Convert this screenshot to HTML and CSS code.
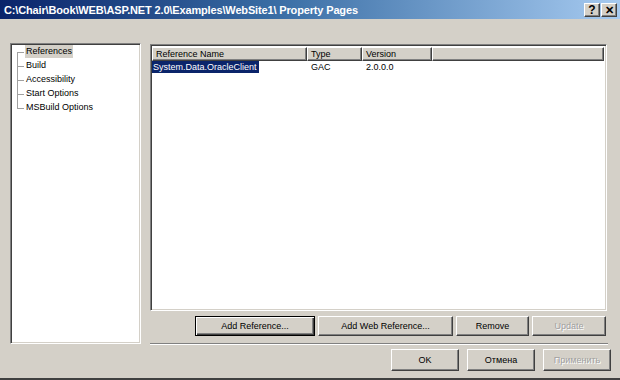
FILE: index.html
```html
<!DOCTYPE html>
<html>
<head>
<meta charset="utf-8">
<link rel="stylesheet" href="styles.css">
</head>
<body>
<div class="window">
  <div class="titlebar">
    <span class="title">C:\Chair\Book\WEB\ASP.NET 2.0\Examples\WebSite1\ Property Pages</span>
    <div class="tbtns">
      <span class="tbtn">?</span>
      <span class="tbtn close">✕</span>
    </div>
  </div>
  <div class="content">
    <div class="main">
      <div class="tree sunken">
        <ul class="items">
          <li class="item selected"><span>References</span></li>
          <li class="item"><span>Build</span></li>
          <li class="item"><span>Accessibility</span></li>
          <li class="item"><span>Start Options</span></li>
          <li class="item last"><span>MSBuild Options</span></li>
        </ul>
      </div>
      <div class="right">
        <div class="list sunken">
          <div class="header">
            <div class="hcell c1">Reference Name</div>
            <div class="hcell c2">Type</div>
            <div class="hcell c3">Version</div>
            <div class="hcell c4"></div>
          </div>
          <div class="row">
            <div class="cell c1"><span class="sel">System.Data.OracleClient</span></div>
            <div class="cell c2">GAC</div>
            <div class="cell c3">2.0.0.0</div>
          </div>
        </div>
        <div class="btnrow">
          <button class="btn default w-add">Add Reference...</button>
          <button class="btn w-web">Add Web Reference...</button>
          <button class="btn w-rem">Remove</button>
          <button class="btn w-upd disabled">Update</button>
        </div>
        <div class="separator"></div>
      </div>
    </div>
    <div class="footer">
      <button class="btn w-foot">OK</button>
      <button class="btn w-foot">Отмена</button>
      <button class="btn w-foot disabled">Применить</button>
    </div>
  </div>
</div>
</body>
</html>
```

FILE: styles.css
```css
* { box-sizing: border-box; }
html, body { margin: 0; padding: 0; }
body {
  width: 620px;
  height: 380px;
  background: #d4d0c8;
  font-family: "Liberation Sans", Arial, sans-serif;
  font-size: 9px;
  color: #000;
  overflow: hidden;
}
.window {
  width: 620px;
  height: 380px;
  border-bottom: 2px solid #404040;
  display: flex;
  flex-direction: column;
}
.titlebar {
  height: 19px;
  background: linear-gradient(to right, #0a246a 0%, #3a6ea5 45%, #a6caf0 100%);
  display: flex;
  align-items: center;
  justify-content: space-between;
  padding: 0 4px 0 4px;
}
.title {
  color: #fff;
  font-weight: bold;
  font-size: 11px;
  letter-spacing: -0.15px;
  white-space: nowrap;
}
.tbtns { display: flex; gap: 1px; margin-top: 1px; margin-right: -1px; }
.tbtn {
  width: 16px;
  height: 14px;
  background: #d4d0c8;
  border-top: 1px solid #fff;
  border-left: 1px solid #fff;
  border-right: 1px solid #404040;
  border-bottom: 1px solid #404040;
  box-shadow: inset -1px -1px 0 #808080;
  font-weight: bold;
  font-size: 12px;
  line-height: 12px;
  text-align: center;
  color: #000;
}
.tbtn.close { font-size: 11px; }
.content {
  flex: 1;
  padding: 24px 9px 0 10px;
  display: flex;
  flex-direction: column;
}
.main {
  display: flex;
  gap: 9px;
}
.sunken {
  border-top: 1px solid #808080;
  border-left: 1px solid #808080;
  border-right: 1px solid #fff;
  border-bottom: 1px solid #fff;
  box-shadow: inset 1px 1px 0 #404040, inset -1px -1px 0 #d4d0c8;
  background: #fff;
}
.tree {
  width: 131px;
  height: 301px;
  padding: 1px 2px 2px 6px;
}
.items {
  list-style: none;
  margin: 0;
  padding: 0;
}
.item {
  position: relative;
  height: 14px;
  line-height: 13px;
  padding-left: 8px;
}
.item::before {
  content: "";
  position: absolute;
  left: 0;
  top: 7px;
  width: 7px;
  border-top: 1px solid #a0a0a0;
}
.item::after {
  content: "";
  position: absolute;
  left: 0;
  top: 7px;
  height: 14px;
  border-left: 1px solid #a0a0a0;
}
.item.last::after { display: none; }
.item span { padding: 0 1px; display: inline-block; }
.item.selected span { background: #d4d0c8; }
.right {
  display: flex;
  flex-direction: column;
  width: 458px;
  margin-top: 1px;
}
.list {
  width: 457px;
  height: 267px;
  padding: 2px 2px 2px 1px;
}
.header { display: flex; height: 14px; }
.hcell {
  background: #d4d0c8;
  border-top: 1px solid #fff;
  border-left: 1px solid #fff;
  border-right: 1px solid #404040;
  border-bottom: 1px solid #404040;
  box-shadow: inset -1px -1px 0 #808080;
  padding-left: 3px;
  line-height: 12px;
  white-space: nowrap;
}
.c1 { width: 155px; }
.c2 { width: 55px; }
.c3 { width: 70px; }
.c4 { flex: 1; }
.row { display: flex; height: 13px; line-height: 12px; }
.cell { padding-left: 4px; white-space: nowrap; }
.row .c1 { padding-left: 0; }
.sel { background: #0a246a; color: #fff; padding: 0 2px 0 1px; display: inline-block; }
.btnrow {
  display: flex;
  justify-content: flex-end;
  gap: 3px;
  margin-top: 5px;
  padding-right: 2px;
}
.btn {
  font-family: "Liberation Sans", Arial, sans-serif;
  font-size: 9px;
  background: #d4d0c8;
  color: #000;
  height: 20px;
  padding: 0;
  border-top: 1px solid #fff;
  border-left: 1px solid #fff;
  border-right: 1px solid #404040;
  border-bottom: 1px solid #404040;
  box-shadow: inset -1px -1px 0 #808080;
  border-radius: 0;
}
.btn.default {
  border: 1px solid #000;
  box-shadow: inset 1px 1px 0 #fff, inset -1px -1px 0 #404040, inset -2px -2px 0 #808080;
}
.btn.disabled { color: #a0a0a0; text-shadow: 1px 1px 0 #fff; }
.w-add { width: 120px; }
.w-web { width: 135px; }
.w-rem { width: 73px; }
.w-upd { width: 74px; }
.separator {
  margin-top: 7px;
  border-top: 1px solid #808080;
  border-bottom: 1px solid #fff;
}
.footer {
  display: flex;
  justify-content: flex-end;
  gap: 8px;
  margin-top: 4px;
}
.w-foot { width: 68px; height: 22px; }
```
